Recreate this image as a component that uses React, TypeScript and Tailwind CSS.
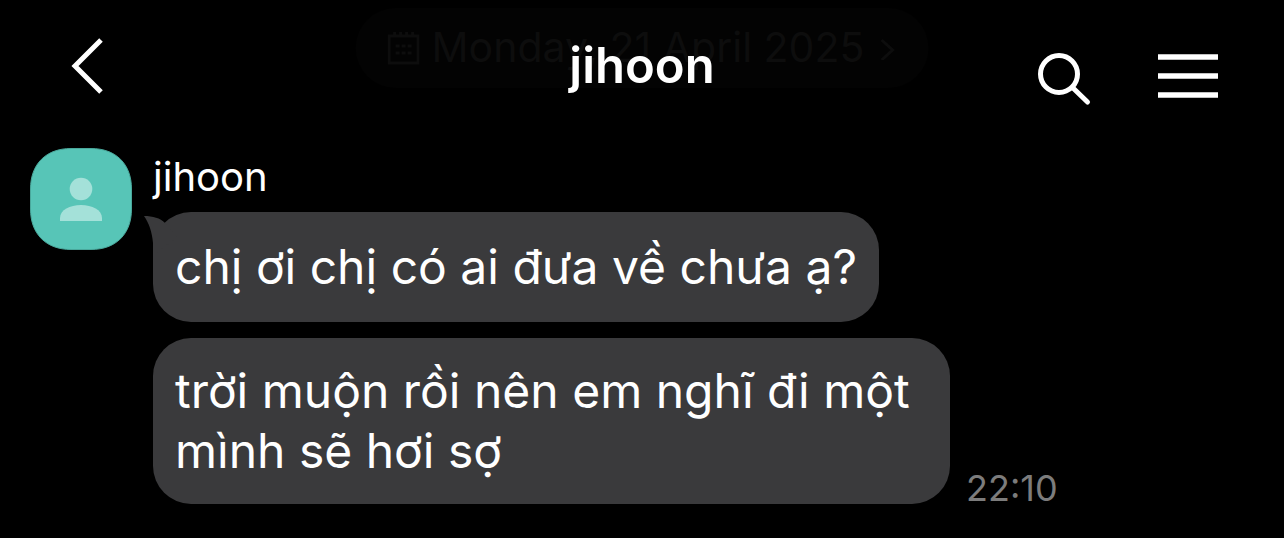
import { clsx } from 'clsx';

type Message = {
  id: number;
  text: string;
  time?: string;
};

const messages: Message[] = [
  { id: 1, text: 'chị ơi chị có ai đưa về chưa ạ?' },
  { id: 2, text: 'trời muộn rồi nên em nghĩ đi một mình sẽ hơi sợ', time: '22:10' },
];

function DatePill() {
  return (
    <button
      type="button"
      className="absolute top-2 left-1/2 flex h-20 -translate-x-1/2 items-center gap-3 rounded-full bg-[#030303] px-8 text-[41px] whitespace-nowrap text-[#0d0d0d]"
    >
      <svg className="h-9 w-8 shrink-0" viewBox="0 0 32 36" fill="none" stroke="currentColor" strokeWidth="3" aria-hidden="true">
        <path d="M1.5 6h29v27h-29zM7 2v4M13 2v4M19 2v4M25 2v4" />
        <path d="M8 16h4M14 16h4M20 16h4M8 23h4M14 23h4M20 23h4" />
      </svg>
      Monday, 21 April 2025
      <svg className="h-6 w-5 shrink-0" viewBox="0 0 20 24" fill="none" stroke="currentColor" strokeWidth="3" aria-hidden="true">
        <path d="M5 4l11 10-11 10" />
      </svg>
    </button>
  );
}

function Header() {
  return (
    <header className="relative">
      <DatePill />
      <div className="relative grid h-[132px] grid-cols-[1fr_auto_1fr] items-center px-16">
        <button type="button" aria-label="Back" className="justify-self-start">
          <svg className="h-[60px] w-11" viewBox="0 0 44 60" fill="none" stroke="white" strokeWidth="5" aria-hidden="true">
            <path d="M37 4L11 30l26 26" />
          </svg>
        </button>
        <h1 className="text-[49px] font-semibold">jihoon</h1>
        <div className="flex items-center gap-16 justify-self-end pt-6">
          <button type="button" aria-label="Search">
            <svg className="h-14 w-14" viewBox="0 0 56 56" fill="none" stroke="white" strokeWidth="5" aria-hidden="true">
              <circle cx="21" cy="24" r="18.5" />
              <path d="M34.5 37.5L49.5 52" strokeLinecap="round" />
            </svg>
          </button>
          <button type="button" aria-label="Menu">
            <svg className="h-14 w-[62px]" viewBox="0 0 62 56" fill="none" stroke="white" strokeWidth="5.5" aria-hidden="true">
              <path d="M0 7h60M0 26h60M0 45h60" />
            </svg>
          </button>
        </div>
      </div>
    </header>
  );
}

function Avatar() {
  return (
    <svg className="h-[102px] w-[102px] shrink-0" viewBox="0 0 102 102" role="img" aria-label="jihoon">
      <path
        d="M41 .5h20C86 .5 101.5 16 101.5 41v20c0 25-15.5 40.500-40.500 40.500h-20C16 101.500.5 86 .5 61V41C.5 16 16 .5 41 .5z"
        fill="#57c5b7"
        stroke="#4aa89c"
      />
      <circle cx="51" cy="41" r="11.3" fill="#a4e1d9" />
      <path d="M30 73v-3c0-8 10-13 21-13s21 5 21 13v3z" fill="#a4e1d9" />
    </svg>
  );
}

function Bubble({ message, first }: { message: Message; first: boolean }) {
  return (
    <li className="flex items-end gap-4">
      <div
        className={clsx(
          'relative max-w-[797px] rounded-[38px] bg-[#3a3a3c] px-[22px] text-[48px] leading-[60px]',
          first ? 'py-[25px]' : 'py-[23px]',
        )}
      >
        {first && (
          <svg className="absolute top-1 -left-[9px] h-12 w-12" viewBox="0 0 48 48" fill="#3a3a3c" aria-hidden="true">
            <path d="M0 0c9 0 16 2 21 7l12 14L9 40V27C8 16 5 7 0 0z" />
          </svg>
        )}
        <p className="relative">{message.text}</p>
      </div>
      {message.time && <time className="text-[36px] leading-8 text-[#7c7c7c]">{message.time}</time>}
    </li>
  );
}

export default function App() {
  return (
    <div className="min-h-screen bg-black font-['Inter','Noto_Sans',sans-serif] text-white">
      <Header />
      <main className="flex items-start gap-[21px] px-[30px] pt-4 pb-8">
        <Avatar />
        <section className="min-w-0 flex-1">
          <h2 className="pt-1 pb-[10px] text-[40px] leading-[50px]">jihoon</h2>
          <ul className="flex flex-col gap-4">
            {messages.map((message, i) => (
              <Bubble key={message.id} message={message} first={i === 0} />
            ))}
          </ul>
        </section>
      </main>
    </div>
  );
}
